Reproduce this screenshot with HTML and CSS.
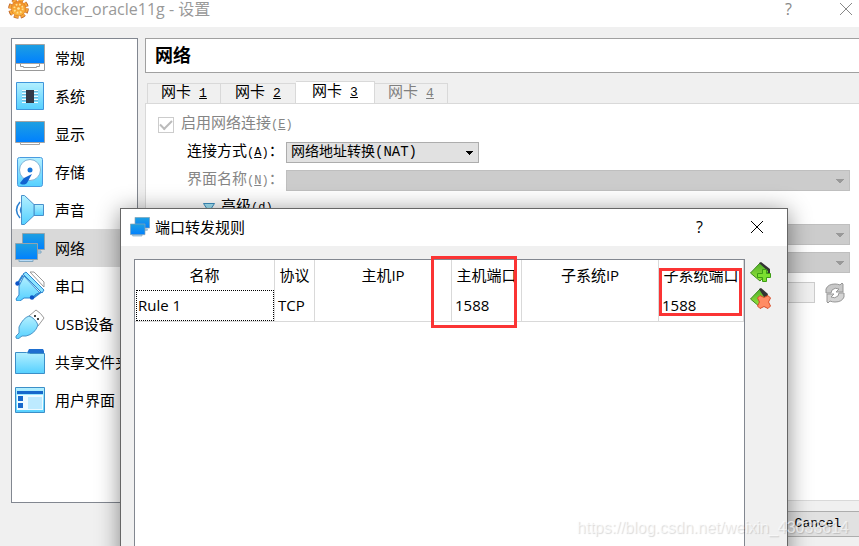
FILE: index.html
```html
<!DOCTYPE html>
<html lang="zh-CN">
<head>
<meta charset="utf-8">
<title>docker_oracle11g - 设置</title>
<link rel="stylesheet" href="styles.css">
</head>
<body>
<svg class="defs" aria-hidden="true">
  <defs>
    <linearGradient id="screen" x1="0" y1="0" x2="0" y2="1"><stop offset="0" stop-color="#1fa0e0"/><stop offset="1" stop-color="#0080ff"/></linearGradient>
    <linearGradient id="pale" x1="0" y1="0" x2="0" y2="1"><stop offset="0" stop-color="#b4f0ff"/><stop offset="1" stop-color="#55d0ff"/></linearGradient>
    <linearGradient id="gold" x1="0" y1="0" x2="0" y2="1"><stop offset="0" stop-color="#f08c28"/><stop offset="1" stop-color="#fcb83c"/></linearGradient>
    <linearGradient id="leaf" x1="0" y1="0" x2="0" y2="1"><stop offset="0" stop-color="#4fae28"/><stop offset="1" stop-color="#9be83c"/></linearGradient>
    <symbol id="net" viewBox="0 0 30 30">
      <path d="M12 18h14v2H12z" fill="#b9dcf8" stroke="#7fa6c0"/>
      <path d="M7.500.5h22v16h-22z" fill="url(#screen)" stroke="#92a4ae"/>
      <path d="M4 26.500h14v2H4z" fill="#b9dcf8" stroke="#7fa6c0"/>
      <path d="M.5 10.500h22v16H.5z" fill="url(#screen)" stroke="#92a4ae"/>
    </symbol>
  </defs>
</svg>

<header class="titlebar">
  <svg class="gear" viewBox="0 0 20 20"><circle cx="10" cy="10" r="8" fill="none" stroke="#b85a20" stroke-width="3.600" stroke-dasharray="4.200 2.083"/><circle cx="10" cy="10" r="7.600" fill="none" stroke="#f8a838" stroke-width="3" stroke-dasharray="3.600 2.369"/><circle cx="10" cy="10" r="7" fill="url(#gold)" stroke="#d87824" stroke-width=".6"/><circle cx="10" cy="10" r="4" fill="none" stroke="#ffe08c" stroke-width="1.800" stroke-dasharray="1.600 1.542"/><circle cx="10" cy="10" r="1.300" fill="#ffe9a0"/></svg>
  <h1 class="app-title">docker_oracle11g - 设置</h1>
  <button class="win-btn muted" type="button" aria-label="帮助">?</button>
  <button class="win-btn muted" type="button" aria-label="关闭"><svg viewBox="0 0 14 14"><path d="M1 1l12 12M13 1L1 13" stroke="currentColor" fill="none"/></svg></button>
</header>

<div class="workspace">
  <nav class="sidebar">
    <a class="nav-item" href="#general"><svg viewBox="0 0 30 30"><path d="M.5 20.500h29v7H.5zM5.500 20.500v3h3v1h13v-1h3v-3" fill="#fff" stroke="#999"/><path d="M.5 1.500h29v19H.5z" fill="url(#screen)" stroke="#a4a4a4"/></svg>常规</a>
    <a class="nav-item" href="#system"><svg viewBox="0 0 30 30"><path d="M1.500 1.500h27v27h-27z" fill="url(#pale)" stroke="#3f96dc"/><path d="M7 9.500h16M7 12.500h16M7 15.500h16M7 18.500h16M7 21.500h16" stroke="#f0fcff"/><path d="M7 10.500h16M7 13.500h16M7 16.500h16M7 19.500h16" stroke="#70b8d8"/><path d="M11 9h8v13h-8z" fill="#333946"/></svg>系统</a>
    <a class="nav-item" href="#display"><svg viewBox="0 0 30 30"><path d="M5.500 23.500h19v2h-19z" fill="#fff" stroke="#a4a4a4"/><path d="M.5 2.500h29v21H.5z" fill="url(#screen)" stroke="#a4a4a4"/></svg>显示</a>
    <a class="nav-item" href="#storage"><svg viewBox="0 0 30 30"><rect x="2.500" y=".5" width="25" height="29" rx="2" fill="url(#pale)" stroke="#4a9be0"/><circle cx="15" cy="13" r="10.500" fill="#fff" stroke="#82b4d8"/><circle cx="15" cy="13" r="2.500" fill="#1473d8"/><path d="M17 17l-8 4-4 5c1 2 5 2 7 0z" fill="#1263d0"/></svg>存储</a>
    <a class="nav-item" href="#audio"><svg viewBox="0 0 30 30"><path d="M5 7Q-2 15 5 23M8 10Q3 15 8 20" fill="none" stroke="#2b80d0" stroke-width="1.500"/><path d="M19 9.500h9.500v11H19z" fill="url(#pale)" stroke="#4890cc"/><path d="M6.500.5h3l9.500 9v11l-9.500 9h-3z" fill="url(#pale)" stroke="#4890cc"/></svg>声音</a>
    <a class="nav-item current" href="#network" aria-current="page"><svg viewBox="0 0 30 30"><use href="#net"/></svg>网络</a>
    <a class="nav-item" href="#serial"><svg viewBox="0 0 30 30"><path d="M15 1h4l10 10v5z" fill="#fff" stroke="#999"/><path d="M9 5l16 17-4 1-4 4H9l-4 3H2l-1-2 3-4v-9z" fill="url(#pale)" stroke="#2f86d0"/><path d="M8 3l3-2 18 18-2 3z" fill="#8ce4ff" stroke="#2f86d0"/><path d="M8 4L3 12M26 21l-8 6" stroke="#2f86d0" stroke-width="2"/><circle cx="2.500" cy="12.500" r="2.200" fill="#0c55c8"/><circle cx="17" cy="26.500" r="2.200" fill="#0c55c8"/></svg>串口</a>
    <a class="nav-item" href="#usb"><svg viewBox="0 0 30 30"><path d="M14 7l7-6q5 3 8 8l-6 8z" fill="#fff" stroke="#999"/><path d="M19 6h2v2h-2zM22 9h2v2h-2z" fill="#444"/><path d="M14 7q6 2 9 9-3 9-12 11H7l-4 3-2-1v-2l3-3v-6Q8 9 14 7z" fill="url(#pale)" stroke="#4b94c8"/></svg>USB设备</a>
    <a class="nav-item" href="#shared"><svg viewBox="0 0 30 30"><path d="M12 6l2-4h14l1 2v3z" fill="#1e6fd0"/><path d="M.5 5.500h11l3 1h15v20H.5z" fill="url(#pale)" stroke="#3c8fc8"/></svg>共享文件夹</a>
    <a class="nav-item" href="#ui"><svg viewBox="0 0 30 30"><path d="M.5 2.500h29v25H.5z" fill="url(#pale)" stroke="#3c8fc8"/><path d="M2 10h26v15H2z" fill="#eefaff"/><path d="M2 6h26v3H2zM3 11h5v5H3zM3 18h5v5H3z" fill="#1668cc"/><path d="M13 12h14v12H13z" fill="#bdeaff"/></svg>用户界面</a>
  </nav>

  <main class="content">
    <h2 class="page-title">网络</h2>
    <div class="tabs" role="tablist">
      <button class="tab" type="button" role="tab">网卡<u class="mono">1</u></button>
      <button class="tab" type="button" role="tab">网卡<u class="mono">2</u></button>
      <button class="tab active" type="button" role="tab" aria-selected="true">网卡<u class="mono">3</u></button>
      <button class="tab" type="button" role="tab" disabled>网卡<u class="mono">4</u></button>
    </div>
    <form class="pane">
      <div class="enable">
        <input class="check" type="checkbox" id="enable" checked disabled>
        <label for="enable">启用网络连接<span class="mono">(<u>E</u>)</span></label>
      </div>
      <div class="row">
        <label class="label" for="attach">连接方式<span class="mono">(<u>A</u>)</span>：</label>
        <select class="field short" id="attach"><option>网络地址转换(NAT)</option></select>
      </div>
      <div class="row muted-row">
        <label class="label" for="ifname">界面名称<span class="mono">(<u>N</u>)</span>：</label>
        <select class="field" id="ifname" disabled><option></option></select>
      </div>
      <button class="advanced" type="button"><svg viewBox="0 0 12 10"><path d="M.5.500h11L6 9z" fill="#a4e6f8" stroke="#3d8fc0"/></svg><span>高级<span class="mono">(d)</span></span></button>
      <div class="row"><span class="label"></span><select class="field" aria-label="控制芯片" disabled><option></option></select></div>
      <div class="row"><span class="label"></span><select class="field" aria-label="混杂模式" disabled><option></option></select></div>
      <div class="row mac-row"><span class="label"></span><input class="field mac" type="text" aria-label="MAC地址" disabled>
        <button class="refresh" type="button" aria-label="刷新" disabled><svg viewBox="0 0 20 20"><path d="M1 10V6q2-5 9-5 3 0 5 1l2-2 1 1v8h-7l3-3q-4-2-7 1l-1 3z" fill="#c8c8c8" stroke="#979797"/><path d="M19 10v4q-2 5-9 5-3 0-5-1l-2 2-1-1v-8h7l-3 3q4 2 7-1l1-3z" fill="#d4d4d4" stroke="#979797"/></svg></button>
      </div>
    </form>
    <footer class="actions"><button class="cancel" type="button">Cancel</button></footer>
  </main>
</div>

<section class="dialog" role="dialog" aria-labelledby="dialog-title">
  <header class="dialog-bar">
    <svg class="dialog-icon" viewBox="0 0 30 30"><use href="#net"/></svg>
    <h2 class="dialog-title" id="dialog-title">端口转发规则</h2>
    <button class="win-btn" type="button" aria-label="帮助">?</button>
    <button class="win-btn" type="button" aria-label="关闭"><svg viewBox="0 0 14 14"><path d="M1 1l12 12M13 1L1 13" stroke="currentColor" fill="none"/></svg></button>
  </header>
  <div class="dialog-body">
    <div class="table-box">
      <table class="rules">
        <colgroup><col class="c-name"><col class="c-proto"><col class="c-ip"><col class="c-port"><col class="c-ip"><col class="c-guest"></colgroup>
        <thead><tr><th>名称</th><th>协议</th><th>主机IP</th><th>主机端口</th><th>子系统IP</th><th>子系统端口</th></tr></thead>
        <tbody><tr><td class="focused">Rule 1</td><td>TCP</td><td></td><td>1588</td><td></td><td>1588</td></tr></tbody>
      </table>
    </div>
    <div class="tools">
      <button class="tool" type="button" aria-label="添加规则"><svg viewBox="0 0 21 21"><path d="M.5 11L10 1l9 8-9 10z" fill="url(#leaf)" stroke="#3f8a20"/><path d="M9 1l2-1 9 7v5l-2-1v-2z" fill="#333"/><path d="M12.500 7.500h4v4h4v4h-4v4h-4v-4h-5v-4h5z" fill="#7be030" stroke="#3c9c14"/></svg></button>
      <button class="tool" type="button" aria-label="删除规则"><svg viewBox="0 0 21 21"><path d="M.5 11L10 1l9 8-9 10z" fill="url(#leaf)" stroke="#3f8a20"/><path d="M9 1l2-1 7 6-1 3h-3z" fill="#333"/><path d="M10 7.500l4 2 4-2 2.500 2.500-2 4 2 4-2.500 2.500-4-2-4 2L7.500 18l2-4-2-4z" fill="#ff8c64" stroke="#d84c28"/></svg></button>
    </div>
  </div>
  <span class="mark mark-host"></span>
  <span class="mark mark-guest"></span>
</section>
<div class="watermark">https://blog.csdn.net/weixin_43033614</div>
</body>
</html>
```
FILE: styles.css
```css
* { box-sizing: border-box; }
body {
  margin: 0;
  height: 100vh;
  overflow: hidden;
  position: relative;
  display: flex;
  flex-direction: column;
  background: #f0f0f0;
  color: #000;
  font: 15px/20px "Open Sans", "Noto Sans CJK SC", sans-serif;
}
button, input, select { font: inherit; color: inherit; margin: 0; padding: 0; border: 0; background: none; border-radius: 0; }
h1, h2 { margin: 0; font-size: inherit; font-weight: 400; }
svg { display: block; flex: none; }
.defs { position: absolute; width: 0; height: 0; }
.mono { font-family: "Liberation Mono", monospace; font-size: 13px; }

.titlebar { display: flex; align-items: center; height: 27px; padding: 0 0 10px 8px; background: #fff; color: #999; line-height: 16px; }
.gear { width: 21px; height: 21px; margin-right: 5px; }
.app-title { flex: 1; font-size: 16px; }
.win-btn { width: 57px; height: 16px; display: flex; align-items: center; justify-content: center; font-size: 16px; line-height: 16px; }
.win-btn svg { width: 14px; height: 14px; }
.titlebar .win-btn:last-child { margin-right: -15px; }
.muted { color: #888; }

.workspace { flex: 1; display: flex; gap: 7px; padding: 11px 0 0 11px; min-height: 0; }
.sidebar { width: 127px; margin-bottom: 43px; border: 1px solid #828790; background: #fff; overflow: hidden; }
.nav-item { display: flex; align-items: center; gap: 10px; height: 38px; padding-left: 3px; color: #000; text-decoration: none; white-space: nowrap; }
.nav-item svg { width: 30px; height: 30px; }
.nav-item.current { background: #d9d9d9; }

.content { flex: 1; min-width: 0; display: flex; flex-direction: column; font-family: "Liberation Mono", "Noto Sans CJK SC", monospace; }
.page-title { height: 35px; padding: 0 9px; border: 1px solid #a0a0a0; border-right: 0; background: #fff; font: 700 18px/33px "Open Sans", "Noto Sans CJK SC", sans-serif; }
.tabs { display: flex; align-items: flex-end; padding-left: 2px; height: 30px; }
.tab { height: 20px; width: 75px; display: flex; align-items: center; justify-content: center; gap: 8px; border: 1px solid #d9d9d9; border-bottom: 0; border-left-width: 0; white-space: nowrap; }
.tab:first-child { width: 74px; border-left-width: 1px; }
.tab.active { height: 23px; width: 79px; margin-bottom: -1px; background: #fff; }
.tab:last-child { width: 73px; }
.tab:disabled { color: #808080; }
.pane { flex: 1; padding: 10px 9px 0 12px; border: 1px solid #d9d9d9; border-right: 0; background: #fff; display: flex; flex-direction: column; gap: 7px; }
.pane .mono { font-size: 12px; }
.enable { display: flex; align-items: center; gap: 7px; height: 21px; color: #858585; }
.check { appearance: none; width: 16px; height: 16px; border: 1px solid #ccc; display: grid; place-items: center; }
.check::after { content: ""; width: 10px; height: 5px; border: solid #bbb; border-width: 0 0 2px 2px; transform: rotate(-45deg); margin-bottom: 3px; }
.row { display: flex; align-items: center; height: 21px; }
.label { width: 128px; padding-left: 29px; white-space: nowrap; overflow: hidden; flex: none; }
.muted-row { color: #858585; }
.field { flex: 1; min-width: 0; height: 21px; border: 1px solid #adadad; }
select.field {
  appearance: none;
  padding: 0 4px;
  background: conic-gradient(from 315deg at 50% 100%, #000 90deg, transparent 0) right 5px center / 8px 4px no-repeat, #e1e1e1;
  font-size: 14px;
  line-height: 19px;
}
select.field:disabled { background: conic-gradient(from 315deg at 50% 100%, #999 90deg, transparent 0) right 5px center / 8px 4px no-repeat, #ccc; border-color: #bfbfbf; opacity: 1; }
.field.short { flex: 0 0 193px; }
.advanced { display: flex; align-items: center; gap: 6px; height: 19px; margin-left: 45px; align-self: flex-start; }
.advanced svg { width: 12px; height: 10px; }
.mac-row { margin-top: 2px; }
.field.mac { background: #f0f0f0; border-color: #ccc; }
.refresh { width: 20px; height: 20px; margin: 0 5px 0 10px; }
.actions { height: 45px; padding-top: 10px; display: flex; justify-content: flex-end; }
.cancel { width: 90px; height: 26px; margin-right: -4px; border: 1px solid #adadad; background: #e1e1e1; font-size: 13px; }

.dialog { position: absolute; left: 120px; right: 71px; top: 208px; bottom: -20px; border: 1px solid #666; background: #f0f0f0; box-shadow: 0 3px 22px rgba(0, 0, 0, .45); display: flex; flex-direction: column; }
.dialog-bar { display: flex; align-items: center; height: 37px; padding: 0 2px 2px 9px; background: #fff; }
.dialog-icon { width: 20px; height: 20px; margin-right: 5px; }
.dialog-title { flex: 1; }
.dialog-body { flex: 1; display: flex; gap: 5px; padding: 13px 16px 0 13px; }
.table-box { flex: 1; min-width: 0; border: 1px solid #828790; background: #fff; }
.rules { width: 100%; table-layout: fixed; border-collapse: separate; border-spacing: 0; }
.c-name { width: 140px; }
.c-proto { width: 40px; }
.c-ip { width: 137px; }
.c-port { width: 70px; }
.rules th, .rules td { padding: 0 3px; border-right: 1px solid #d9d9d9; white-space: nowrap; }
.rules th { height: 29px; padding: 0; font-weight: 400; text-align: center; }
.rules td { height: 33px; border-bottom: 1px solid #d9d9d9; }
.rules .focused { outline: 1px dotted #000; outline-offset: -2px; }
.tools { display: flex; flex-direction: column; gap: 5px; padding-top: 3px; }
.tool, .tool svg { width: 21px; height: 21px; }
.mark { position: absolute; border: 3px solid #fb3434; }
.mark-host { left: 310px; top: 47px; width: 86px; height: 72px; }
.mark-guest { left: 538px; top: 59px; width: 83px; height: 48px; }
.watermark { position: absolute; right: 10px; bottom: 8px; font: 16px/20px "Liberation Sans", sans-serif; color: rgba(255, 255, 255, .6); text-shadow: 1px 1px 1px rgba(0, 0, 0, .15); }
```
